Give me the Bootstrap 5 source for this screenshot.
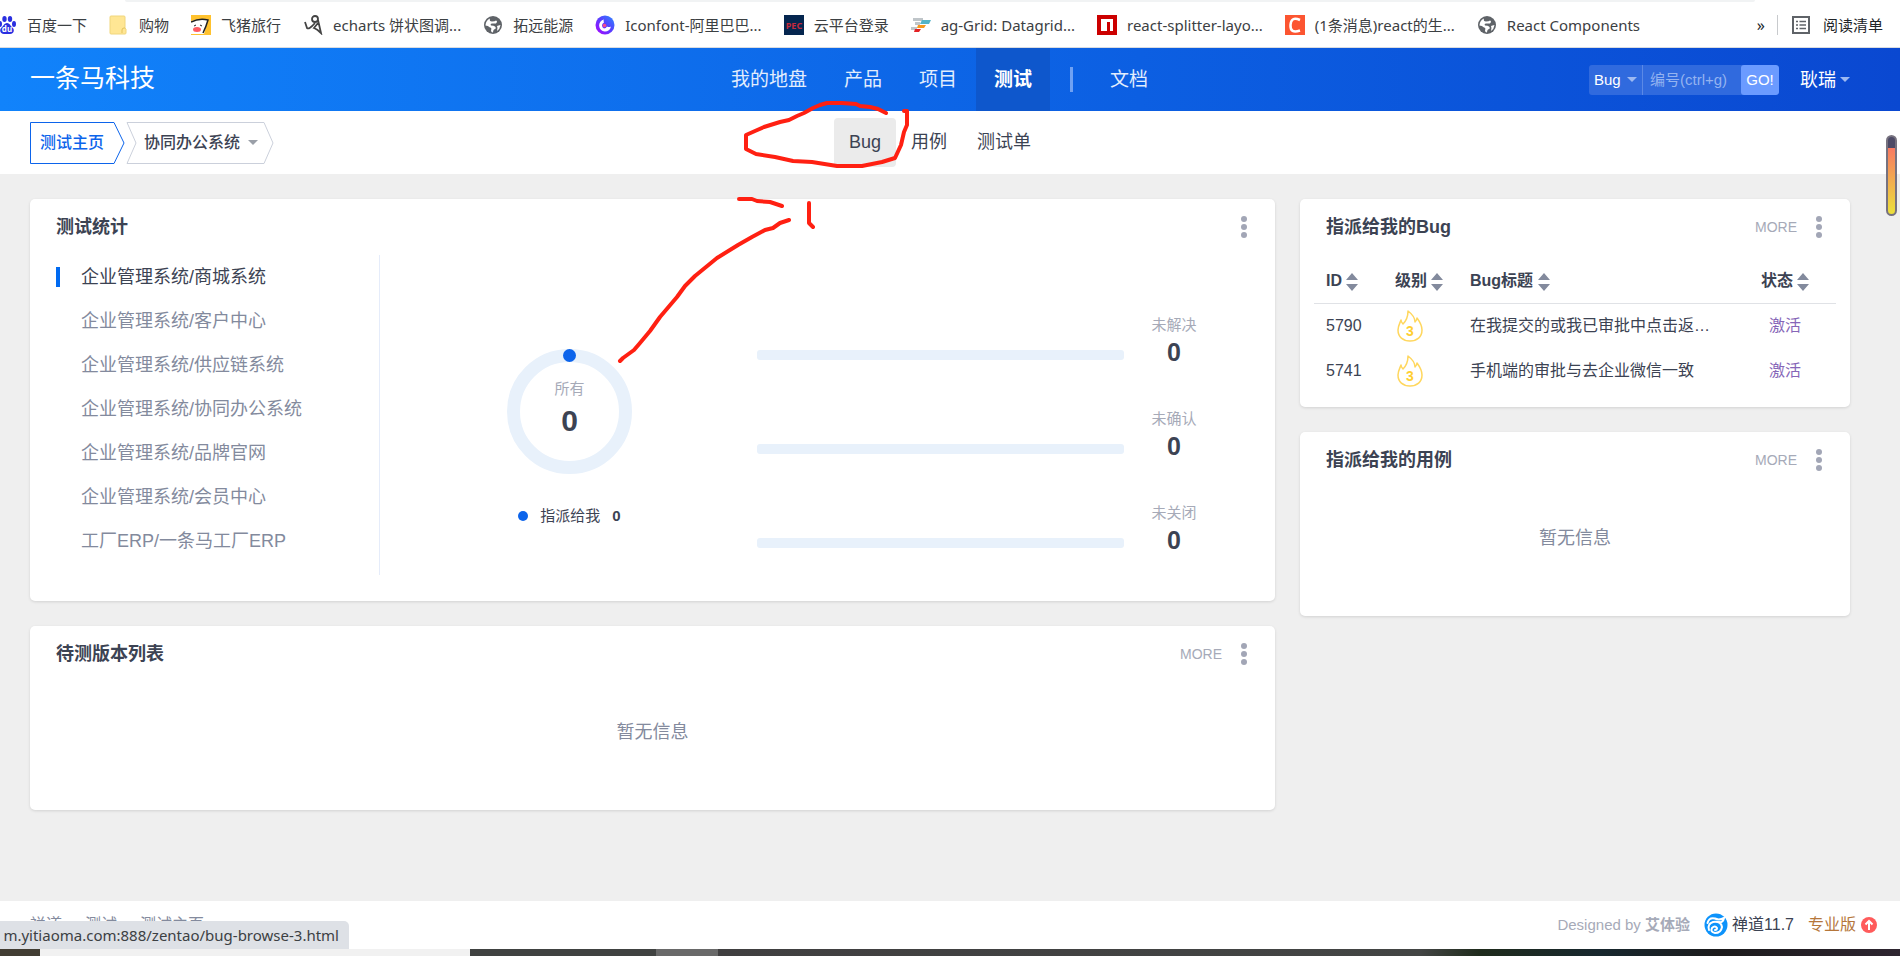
<!DOCTYPE html>
<html lang="zh-CN">
<head>
<meta charset="utf-8">
<meta name="viewport" content="width=device-width, initial-scale=1">
<title>测试主页 - 禅道</title>
<link rel="stylesheet" href="https://cdn.jsdelivr.net/npm/bootstrap@5.3.0/dist/css/bootstrap.min.css">
<style>
:root{--ink:#3c4353;--muted:#838a9d;--pale:#a6aab8;--brand:#0c64eb;--track:#e8f1fb}
body{font-family:"Liberation Sans","Noto Sans CJK SC",sans-serif;font-size:16px;line-height:24px;color:var(--ink);background:#efefef;overflow-x:hidden}
a{color:inherit;text-decoration:none}
.gutters{padding-left:30px;padding-right:50px}

/* browser bookmarks */
.bookmarks{height:48px;padding:2px 17px 0 0;background:#fff;border-bottom:1px solid #dadce0;font-family:"Noto Sans","Noto Sans CJK SC",sans-serif;font-size:15px;color:#3c4043}
.bookmarks::before{content:"";position:absolute;top:0;left:125px;right:145px;height:2px;background:#f1f3f4;border-radius:0 0 8px 8px}
.bookmarks ul{gap:22px}
.bookmarks li a{gap:10px}
.bookmarks svg{width:20px;height:20px}
.bookmarks li:first-child svg{margin-left:-3px}
.reading{gap:12px;padding-left:13px;border-left:1px solid #c8cacd;height:20px;margin-left:12px}

/* header */
.topbar{height:63px;background:linear-gradient(90deg,#1183fb,#0c5fe2 60%,#0a48d1);color:#fff}
.brandname{font-size:25px}
.mainnav{font-size:19px;line-height:63px;color:#e2edfd}
.mainnav a{padding:0 18px;margin-right:1px}
.mainnav a.active{background:#0e57cc;color:#fff;font-weight:700}
.mainnav .split{width:3px;height:25px;background:#6fa1f3;margin:0 19px}
.side{flex:1 1 0}
.search{height:30px;font-size:15px;line-height:30px;border-radius:3px;overflow:hidden;background:#306ade}
.search button{border:0;background:none;color:#fff;padding:0 5px;line-height:30px}
.search .kind{width:54px;border-right:1px solid #5b89e6}
.search input{width:98px;border:0;background:none;color:#fff;padding:0 7px;outline:0}
.search input::placeholder{color:#94b3f0;opacity:1}
.search .go{width:38px;background:#6b9bff;border-radius:3px;padding:0}
.caret{display:inline-block;border:5px solid transparent;border-bottom:0;border-top-color:#9db9f2}
.user{font-size:18px;margin-left:21px}

.subbar{height:63px;background:#fff}
.subnav{font-size:18px}
.subnav a{padding:0 15px;line-height:49px;border-radius:4px}
.subnav a.active{background:#ebebeb}
.crumb{height:42px;font-weight:500}
.crumb svg{position:absolute;inset:0;width:100%;height:100%}
.crumb span{position:relative}
.crumb-home{width:95px;padding-left:10px;color:var(--brand)}
.crumb-prod{width:148px;padding-left:18px;margin-left:1px}
.crumb-prod .caret{border-top-color:#9a9fa8;position:relative}

/* panels */
.board{display:grid;grid-template-columns:1245fr 550fr;gap:25px;padding-top:25px;align-items:start}
.stack{display:grid;gap:25px}
.panel{background:#fff;border-radius:5px;box-shadow:0 1px 3px rgba(0,0,0,.12)}
.panel-top{height:56px;padding:0 28px 0 26px}
.panel-top h2{font-size:18px;line-height:24px;font-weight:700;margin:0}
.more{font-size:14px;color:var(--pale)}
.dots{border:0;background:none;padding:0;line-height:0;margin-left:19px}
.empty{height:128px;padding-top:38px;text-align:center;color:var(--muted);font-size:18px}
.stats{display:grid;grid-template-columns:350fr 379fr 516fr}
.projects{height:320px;border-right:1px solid #e5ecfa;font-size:18px;line-height:44px;color:var(--muted);padding-left:26px;margin:0 0 26px}
.projects a{display:block;padding-left:25px;position:relative}
.projects a.active{color:var(--ink)}
.projects a.active::before{content:"";position:absolute;left:0;top:12px;width:4px;height:20px;background:#006af1}
.ringbox{padding-top:94px}
.ring{width:125px;height:125px}
.ring svg{position:absolute;inset:0}
.ring-in{position:relative;padding-top:28px;text-align:center}
.note{font-size:15px;color:var(--pale)}
.total{font-size:30px;line-height:40px;font-weight:700}
.legend-row{font-size:15px;margin-top:30px;gap:12px}
.legend-row i{width:10px;height:10px;border-radius:50%;background:var(--brand)}
.meters{display:grid;grid-auto-rows:94px;align-content:start;padding:53px 51px 0 0}
.meter{display:grid;grid-template-columns:1fr 100px;align-items:center;text-align:center;margin-left:-2px}
.figure-box{padding-bottom:30px}
.track{height:10px;border-radius:3px;background:var(--track)}
.count{font-size:25px;line-height:30px;font-weight:700}

.bugs{width:calc(100% - 28px);margin:0 14px 14px;table-layout:fixed;border-collapse:collapse}
.bugs th,.bugs td{height:45px;padding:0;white-space:nowrap}
.bugs th{height:48px;padding-top:4px}
.bugs thead tr{border-bottom:1px solid #e0e2e6}
.bugs th:first-child,.bugs td:first-child{padding-left:12px}
.bugs svg{vertical-align:middle}
.bugs .level{padding-left:2px}
.bugs .title a{display:block;width:246px;overflow:hidden;text-overflow:ellipsis}
.bugs td.state{color:#8666b8;padding-left:8px}

/* footer */
.foot{height:48px;background:#fff;padding:0 22px 0 30px}
.trail{gap:23px;color:var(--muted)}
.credit{font-size:15px;color:var(--pale)}
.about{gap:14px}
.pro{color:#b5763a}
.status{position:absolute;left:0;bottom:7px;height:28px;width:349px;padding-right:10px;background:#dee1e6;border-radius:0 5px 0 0;font:15px/28px "Noto Sans",sans-serif;color:#3c4043;overflow:hidden;justify-content:flex-end}
.taskbar{height:7px;background:linear-gradient(90deg,#423d33 40px,#f1f1f1 40px 470px,#404241 470px 656px,#696969 656px 718px,#403f40 718px,#434544 1420px,#1f2b1c 1480px,#17272e 1600px,#1c1b1c 1720px,#2e2530)}
.thumb{position:absolute;top:135px;right:3px;width:11px;height:81px;border-radius:6px;border:2px solid #77727f;background:linear-gradient(#4d4a66 11px,#f87a62 11px,#ece03c)}
.ink{position:absolute;left:0;top:0;pointer-events:none}
</style>
</head>
<body class="position-relative d-flex flex-column min-vh-100">

<svg class="d-none">
  <symbol id="globe" viewBox="0 0 20 20"><circle cx="10" cy="10" r="9" fill="#5f6368"/><path d="M2.500 10Q3 5 7 3.500q-1 3 2 3t4-1q2 1 0 3H9q-2 0-1 2 3 0 4 1 2 2-1 3-1 1-1 3-2 0-2-2 1-3-1-3-2-2-4.500-2zM14 11q3-1 3.500-1-.5 4-3.500 6 1-3 0-5z" fill="#fff"/></symbol>
  <symbol id="kebab" viewBox="0 0 6 22"><g fill="#a2a6b6"><circle cx="3" cy="3" r="3"/><circle cx="3" cy="11" r="3"/><circle cx="3" cy="19" r="3"/></g></symbol>
  <symbol id="sort" viewBox="0 0 12 18"><path d="M6 0l6 7H0zM6 18l6-7H0z" fill="#838a9d"/></symbol>
  <symbol id="flame" viewBox="0 0 26 32"><path d="M11 1c4 3 7 7 7 11 1-1 2-3 2-4 3 4 5 8 5 12 0 7-5 11-12 11S1 27 1 20c0-4 2-7 3-10 0 2 1 3 2 4 4-4 5-8 5-13z" fill="none" stroke="#ffd75e" stroke-width="1.5" stroke-linejoin="round"/><text x="13" y="26" text-anchor="middle" font-size="14" font-weight="700" fill="#ffcf33">3</text></symbol>
</svg>

<nav class="bookmarks position-relative d-flex align-items-center" aria-label="书签栏">
  <ul class="list-unstyled d-flex mb-0 text-nowrap flex-grow-1">
    <li><a href="#" class="d-flex align-items-center"><svg viewBox="0 0 20 20"><g fill="#2a2fe0"><ellipse cx="3" cy="9" rx="2" ry="3"/><ellipse cx="7.500" cy="4" rx="2.200" ry="3"/><ellipse cx="13" cy="4" rx="2.200" ry="3"/><ellipse cx="17" cy="9" rx="2" ry="3"/><path d="M10 8c3 0 4 4 6 5 2 3 0 6-3 6H7c-3 0-5-3-3-6 2-1 3-5 6-5z"/></g><text x="10" y="17" text-anchor="middle" font-size="8" font-weight="700" fill="#fff">du</text></svg>百度一下</a></li>
    <li><a href="#" class="d-flex align-items-center"><svg viewBox="0 0 20 20"><path d="M2 1h13q1 0 1 1v11l1 1v4q0 1-1 1H2q-1 0-1-1V2q0-1 1-1z" fill="#ffe694" stroke="#f0d67c"/><path d="M13 18v-3q0-2 2-2h1" fill="none" stroke="#e3c25c"/></svg>购物</a></li>
    <li><a href="#" class="d-flex align-items-center"><svg viewBox="0 0 20 20"><path fill="#ffc22e" d="M0 0h20v20H0z"/><path d="M0 6q8-3 17-1l-4 14H0z" fill="#fff"/><path d="M0 7q8-4 17-2-2 7-5 13" fill="none" stroke="#222" stroke-width="1.500"/><path d="M3 11l2-1M9 10l2 1" stroke="#222"/><ellipse cx="6" cy="14.500" rx="4" ry="2.500" fill="#ff5b62"/></svg>飞猪旅行</a></li>
    <li><a href="#" class="d-flex align-items-center"><svg viewBox="0 0 20 20" fill="none" stroke="#444" stroke-width="1.800"><circle cx="12" cy="4" r="3"/><path d="M2 7l2 6q2 2 8-5M15 5l3 13q-4-4-7-5l4-5"/></svg>echarts 饼状图调...</a></li>
    <li><a href="#" class="d-flex align-items-center"><svg><use href="#globe"/></svg>拓远能源</a></li>
    <li><a href="#" class="d-flex align-items-center"><svg viewBox="0 0 20 20"><defs><linearGradient id="ic" x1="1" y1="0" x2="0" y2="1"><stop stop-color="#2a8bff"/><stop offset=".5" stop-color="#5a3cff"/><stop offset="1" stop-color="#b100ff"/></linearGradient></defs><circle cx="10" cy="10" r="9.500" fill="url(#ic)"/><path d="M9 4.500a6 6 0 1 0 7 7q-2 1-4 0-1 2-3 2-2-1-2-3 0-2 2-3-1-2 0-3z" fill="#fff"/><circle cx="9.500" cy="10.500" r="1.800" fill="#f24b8e"/></svg>Iconfont-阿里巴巴...</a></li>
    <li><a href="#" class="d-flex align-items-center"><svg viewBox="0 0 20 20"><path fill="#05264f" d="M0 0h20v20H0z"/><text x="10" y="14" text-anchor="middle" font-size="9" font-weight="700" fill="#c32a3c">PEC</text></svg>云平台登录</a></li>
    <li><a href="#" class="d-flex align-items-center"><svg viewBox="0 0 20 20"><path d="M2 3h10v3H2zM0 12h6v3H0zM4 7h5v3H4z" fill="#bfc5c9"/><path d="M11 5h9l-2 4H9z" fill="#55b4c8"/><path d="M7 10h8l-2 3H6z" fill="#f8981d"/><path d="M4 14h6l-2 3H3z" fill="#e32124"/></svg>ag-Grid: Datagrid...</a></li>
    <li><a href="#" class="d-flex align-items-center"><svg viewBox="0 0 20 20"><path fill="#c00" d="M0 0h20v20H0z"/><path fill="#fff" d="M4 4h12v12h-3V7h-3v9H4z"/></svg>react-splitter-layo...</a></li>
    <li><a href="#" class="d-flex align-items-center"><svg viewBox="0 0 20 20"><path fill="#fc5531" d="M0 0h20v20H0z"/><path d="M15 5Q6 1 5.500 10T15 15.500" fill="none" stroke="#fff" stroke-width="2.500"/></svg>(1条消息)react的生...</a></li>
    <li><a href="#" class="d-flex align-items-center"><svg><use href="#globe"/></svg>React Components</a></li>
  </ul>
  <button class="btn p-0 border-0 lh-1" aria-label="更多书签">»</button>
  <a href="#" class="reading d-flex align-items-center text-nowrap text-dark"><svg viewBox="0 0 20 20"><path d="M2 2h16v16H2z" fill="none" stroke="#5f6368" stroke-width="2"/><path d="M5 6.500h2M5 10h2M5 13.500h2M8.500 6.500H15M8.500 10H15M8.500 13.500H15" stroke="#5f6368" stroke-width="1.500"/></svg>阅读清单</a>
</nav>

<header class="topbar gutters d-flex align-items-center">
  <div class="side"><a href="#" class="brandname">一条马科技</a></div>
  <nav class="mainnav d-flex align-items-center">
    <a href="#">我的地盘</a><a href="#">产品</a><a href="#">项目</a><a href="#" class="active">测试</a><span class="split"></span><a href="#">文档</a>
  </nav>
  <div class="side d-flex justify-content-end align-items-center">
    <form class="search d-flex">
      <button type="button" class="kind d-flex align-items-center justify-content-between">Bug <i class="caret"></i></button>
      <input type="text" placeholder="编号(ctrl+g)" aria-label="编号">
      <button type="button" class="go">GO!</button>
    </form>
    <a href="#" class="user d-flex align-items-center">耿瑞<i class="caret ms-1"></i></a>
  </div>
</header>

<div class="subbar gutters d-flex align-items-center">
  <div class="side d-flex">
    <a href="#" class="crumb crumb-home position-relative d-flex align-items-center"><svg viewBox="0 0 95 42"><path d="M.5.5H84L94 21 84 41.500H.5z" fill="#fff" stroke="#0c64eb"/></svg><span>测试主页</span></a>
    <a href="#" class="crumb crumb-prod position-relative d-flex align-items-center"><svg viewBox="0 0 148 42"><path d="M1 .5H138L147 21 138 41.500H1L10 21z" fill="#fff" stroke="#cbd0db"/></svg><span>协同办公系统</span><i class="caret ms-2"></i></a>
  </div>
  <nav class="subnav d-flex"><a href="#" class="active">Bug</a><a href="#">用例</a><a href="#">测试单</a></nav>
  <div class="side"></div>
</div>

<main class="board gutters flex-grow-1">
  <div class="stack">
    <section class="panel">
      <div class="panel-top d-flex align-items-center"><h2 class="me-auto">测试统计</h2><button class="dots" aria-label="菜单"><svg width="6" height="22"><use href="#kebab"/></svg></button></div>
      <div class="stats">
        <ul class="projects list-unstyled">
          <li><a href="#" class="active">企业管理系统/商城系统</a></li>
          <li><a href="#">企业管理系统/客户中心</a></li>
          <li><a href="#">企业管理系统/供应链系统</a></li>
          <li><a href="#">企业管理系统/协同办公系统</a></li>
          <li><a href="#">企业管理系统/品牌官网</a></li>
          <li><a href="#">企业管理系统/会员中心</a></li>
          <li><a href="#">工厂ERP/一条马工厂ERP</a></li>
        </ul>
        <div class="ringbox d-flex flex-column align-items-center">
          <div class="ring position-relative">
            <svg viewBox="0 0 125 125"><circle cx="62.500" cy="62.500" r="56" fill="none" stroke="#e8f1fb" stroke-width="13"/><circle cx="62.500" cy="6.500" r="6.500" fill="#0c64eb"/></svg>
            <div class="ring-in"><div class="note">所有</div><div class="total">0</div></div>
          </div>
          <div class="legend-row d-flex align-items-center"><i></i><span>指派给我</span><b>0</b></div>
        </div>
        <div class="meters">
          <div class="meter"><div class="track"></div><div class="figure-box"><div class="note">未解决</div><div class="count">0</div></div></div>
          <div class="meter"><div class="track"></div><div class="figure-box"><div class="note">未确认</div><div class="count">0</div></div></div>
          <div class="meter"><div class="track"></div><div class="figure-box"><div class="note">未关闭</div><div class="count">0</div></div></div>
        </div>
      </div>
    </section>
    <section class="panel">
      <div class="panel-top d-flex align-items-center"><h2 class="me-auto">待测版本列表</h2><a href="#" class="more">MORE</a><button class="dots" aria-label="菜单"><svg width="6" height="22"><use href="#kebab"/></svg></button></div>
      <div class="empty">暂无信息</div>
    </section>
  </div>
  <div class="stack">
    <section class="panel">
      <div class="panel-top d-flex align-items-center"><h2 class="me-auto">指派给我的Bug</h2><a href="#" class="more">MORE</a><button class="dots" aria-label="菜单"><svg width="6" height="22"><use href="#kebab"/></svg></button></div>
      <table class="bugs">
        <colgroup><col style="width:81px"><col style="width:75px"><col><col style="width:75px"></colgroup>
        <thead><tr><th>ID <svg width="12" height="18"><use href="#sort"/></svg></th><th>级别 <svg width="12" height="18"><use href="#sort"/></svg></th><th>Bug标题 <svg width="12" height="18"><use href="#sort"/></svg></th><th>状态 <svg width="12" height="18"><use href="#sort"/></svg></th></tr></thead>
        <tbody>
          <tr><td>5790</td><td class="level"><svg width="26" height="32"><use href="#flame"/></svg></td><td class="title"><a href="#">在我提交的或我已审批中点击返回按钮</a></td><td class="state">激活</td></tr>
          <tr><td>5741</td><td class="level"><svg width="26" height="32"><use href="#flame"/></svg></td><td class="title"><a href="#">手机端的审批与去企业微信一致</a></td><td class="state">激活</td></tr>
        </tbody>
      </table>
    </section>
    <section class="panel">
      <div class="panel-top d-flex align-items-center"><h2 class="me-auto">指派给我的用例</h2><a href="#" class="more">MORE</a><button class="dots" aria-label="菜单"><svg width="6" height="22"><use href="#kebab"/></svg></button></div>
      <div class="empty">暂无信息</div>
    </section>
  </div>
</main>

<footer class="foot d-flex align-items-center justify-content-between">
  <nav class="trail d-flex"><a href="#">禅道</a><a href="#">测试</a><a href="#">测试主页</a></nav>
  <div class="about d-flex align-items-center">
    <span class="credit">Designed by <a href="#" class="fw-semibold">艾体验</a></span>
    <a href="#" class="d-flex align-items-center gap-1"><svg width="24" height="24" viewBox="0 0 24 24"><circle cx="12" cy="12" r="11.500" fill="#0d93fb"/><path d="M3.500 10Q5 4 11 5.500q4 2 9-.5-1 5-5 4M5 17q-2-6 4-8 8-1 9 5-1 6-7 6-5-1-3-5 3-3 5 0 0 2-2 2" fill="none" stroke="#fff" stroke-width="2" stroke-linecap="round"/></svg>禅道11.7</a>
    <a href="#" class="pro d-flex align-items-center gap-1"><span>专业版</span><svg width="18" height="18" viewBox="0 0 18 18"><circle cx="9" cy="9" r="8" fill="#ff5b5b"/><path d="M9 14V5M5.500 8.500L9 5l3.500 3.500" fill="none" stroke="#fff" stroke-width="2"/></svg></a>
  </div>
</footer>
<div class="taskbar"></div>

<div class="status d-flex text-nowrap">m.yitiaoma.com:888/zentao/bug-browse-3.html</div>
<div class="thumb"></div>

<!-- hand-drawn markup over the page -->
<svg class="ink" width="920" height="380" fill="none" stroke="#ff2012" stroke-width="4" stroke-linecap="round" stroke-linejoin="round">
  <path d="M886 113L878 109 870 107 860 106 856 104 842 103 827 103 820 105 813 108 804 113 797 116 789 120 780 122 764 127 755 131 746 135V149L756 154 775 157 793 161 812 162 837 166H862L882 162 895 158 901 145 904 132 907 125V111H904"/>
  <path d="M620 361L623 358 634 350 640 343 650 331 660 317 677 297 685 286 695 276 717 258 738 245 752 237 765 230 773 228 780 223 789 220"/>
  <path d="M739 199H752L757 201 770 202 776 204 782 206M809 203V223L813 227"/>
</svg>

<script src="https://cdn.jsdelivr.net/npm/bootstrap@5.3.0/dist/js/bootstrap.bundle.min.js"></script>
</body>
</html>
